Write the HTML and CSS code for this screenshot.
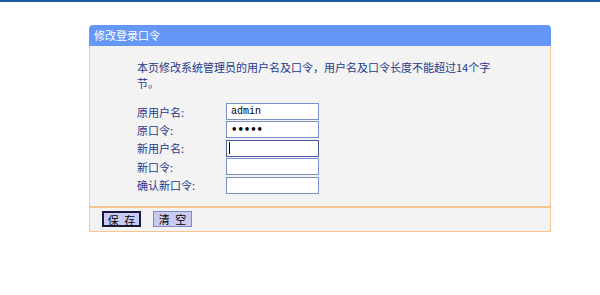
FILE: index.html
```html
<!DOCTYPE html>
<html lang="zh-CN">
<head>
  <meta charset="UTF-8">
  <title>修改登录口令</title>
  <link rel="stylesheet" href="styles.css">
</head>
<body>
  <div class="topbar"></div>

  <div class="panel">
    <div class="panel-title">修改登录口令</div>

    <div class="panel-body">
      <p class="desc">本页修改系统管理员的用户名及口令，用户名及口令长度不能超过14个字节。</p>

      <div class="form">
        <div class="row">
          <label>原用户名:</label>
          <input type="text" value="admin">
        </div>
        <div class="row">
          <label>原口令:</label>
          <input type="password" value="admin">
        </div>
        <div class="row">
          <label>新用户名:</label>
          <div class="fake-input"><span class="caret"></span></div>
        </div>
        <div class="row">
          <label>新口令:</label>
          <input type="password" value="">
        </div>
        <div class="row">
          <label>确认新口令:</label>
          <input type="password" value="">
        </div>
      </div>
    </div>

    <div class="panel-foot">
      <button class="btn active">保&nbsp;存</button>
      <button class="btn">清&nbsp;空</button>
    </div>
  </div>
</body>
</html>
```

FILE: styles.css
```css
body {
  margin: 0;
  background: #ffffff;
  font-family: "Noto Sans CJK SC", "DejaVu Sans", sans-serif;
  font-size: 11px;
}
.topbar {
  height: 2px;
  background: #1d5aa3;
}
.panel {
  width: 462px;
  margin: 23px 0 0 89px;
}
.panel-title {
  height: 21px;
  line-height: 21px;
  background: #6497f8;
  color: #ffffff;
  padding-left: 5px;
  border-radius: 4px 4px 0 0;
}
.panel-body {
  background: #f3f3f3;
  border-left: 1px solid #f8c38e;
  border-right: 1px solid #f8c38e;
  padding: 13px 0 11px 47px;
}
.desc {
  margin: 0;
  width: 362px;
  line-height: 16px;
  color: #1f3a8c;
}
.form {
  margin-top: 12px;
}
.row {
  display: flex;
  align-items: center;
  height: 17px;
  margin-bottom: 1.4px;
}
.row label {
  width: 89px;
  color: #1f3a8c;
}
.row input,
.fake-input {
  box-sizing: border-box;
  width: 93px;
  height: 17px;
  margin: 0;
  padding: 0 4px;
  border: 1px solid #7b8fc8;
  background: #ffffff;
  font-family: "Liberation Mono", monospace;
  font-size: 10px;
  color: #000000;
}
.row input[type="password"] {
  font-family: "DejaVu Sans", sans-serif;
  font-size: 10px;
  font-weight: bold;
  letter-spacing: 0;
}
.fake-input {
  border-color: #4a5a9a;
  display: flex;
  align-items: center;
  padding: 0 2px;
}
.caret {
  width: 1px;
  height: 12px;
  background: #000000;
}
.panel-foot {
  background: #f3f3f3;
  border: 1px solid #f8c38e;
  border-top: 2px solid #f8c38e;
  height: 23px;
  display: flex;
  align-items: center;
  gap: 12px;
  padding-left: 12px;
}
.btn {
  box-sizing: border-box;
  height: 16px;
  width: 39px;
  padding: 0;
  border: 1px solid #7f86c8;
  background: #c9cbf3;
  font-family: "Noto Sans CJK SC", sans-serif;
  font-size: 11px;
  line-height: 14px;
  word-spacing: 3px;
  color: #000000;
}
.btn.active {
  border: 2px solid #1a1a3a;
}
```
